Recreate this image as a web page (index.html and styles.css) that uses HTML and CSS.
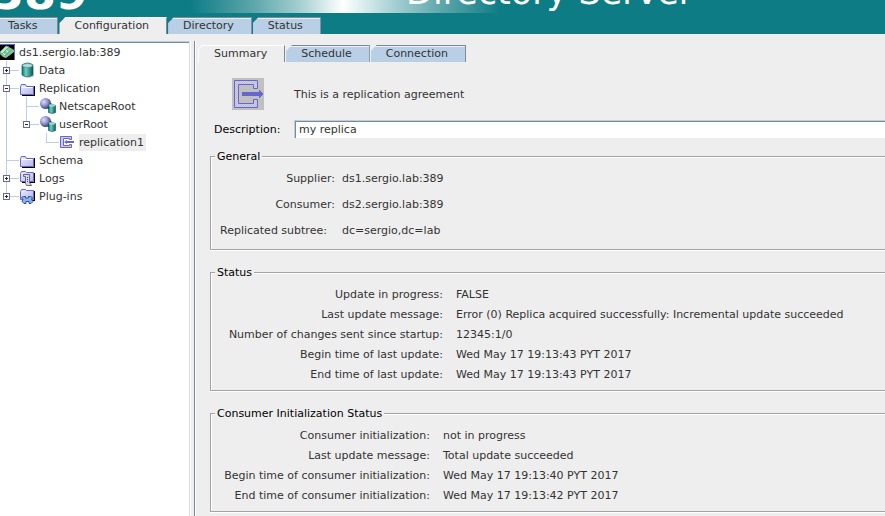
FILE: index.html
```html
<!DOCTYPE html>
<html lang="en">
<head>
<meta charset="utf-8">
<title>389 Directory Server</title>
<link rel="stylesheet" href="styles.css">
</head>
<body>
<svg class="defs" width="0" height="0" aria-hidden="true">
  <defs>
    <pattern id="dither" width="2" height="2" patternUnits="userSpaceOnUse"><rect width="2" height="2" fill="#ccccff"/><rect width="1" height="1" fill="#c0c0c0"/><rect x="1" y="1" width="1" height="1" fill="#c0c0c0"/></pattern>
    <linearGradient id="teal"><stop offset="0" stop-color="#0a6f70"/><stop offset=".35" stop-color="#6fd0c4"/><stop offset="1" stop-color="#06565a"/></linearGradient>
    <linearGradient id="lilac" x2="1" y2="1"><stop offset="0" stop-color="#ececff"/><stop offset="1" stop-color="#b4b4e6"/></linearGradient>
    <radialGradient id="ball" cx=".35" cy=".35" r=".7"><stop offset="0" stop-color="#dcdcff"/><stop offset=".5" stop-color="#9494cc"/><stop offset="1" stop-color="#34346e"/></radialGradient>
    <symbol id="folder" viewBox="0 0 16 16">
      <path d="M14 6h1v10H2v-1h12z" fill="#000"/>
      <path d="M.5 14.500V6.500l1-2h4l1 2h7v8z" fill="url(#lilac)" stroke="#6666cc"/>
      <path d="M1.500 7.500h11" stroke="#fff"/>
    </symbol>
    <symbol id="suffix" viewBox="0 0 16 16">
      <circle cx="5.500" cy="5.500" r="5.500" fill="url(#ball)"/>
      <path d="M11 5q1 4-3 6" stroke="#22224e" fill="none"/>
      <path d="M8.500 7.500q4-2 7 0v7q-3 2-7 0z" fill="url(#teal)" stroke="#07575a" stroke-width=".6"/>
      <ellipse cx="12" cy="7.500" rx="3.200" ry="1.200" fill="#8ee0d4"/>
    </symbol>
  </defs>
</svg>

<header class="header">
  <div class="banner">
    <span class="brand">389</span>
    <span class="product">Directory Server</span>
  </div>
  <div class="tabs" role="tablist">
    <button class="tab first" role="tab">Tasks</button>
    <button class="tab active" role="tab" aria-selected="true">Configuration</button>
    <button class="tab" role="tab">Directory</button>
    <button class="tab" role="tab">Status</button>
  </div>
</header>

<main class="workspace">
  <nav class="tree-pane">
    <div class="row root">
      <svg class="icon" viewBox="0 0 16 16"><path d="M0 0h15v16H0z" fill="#000"/><path d="M0 .5h14.500v15.500" fill="none" stroke="#6666cc"/><path d="M0 8l6-6 3 1 5 3v2l-8 6-3-1-3-3z" fill="#7fc99b"/><path d="M0 8l6-6 3 1-7 7zM5 12l8-7" fill="#b9ecc8" stroke="#5fa87c"/><path d="M3 9l2 2M6 6l2 2" stroke="#fff"/></svg>
      <span>ds1.sergio.lab:389</span>
    </div>
    <ul class="tree">
      <li>
        <div class="row">
          <button class="toggle closed" aria-label="Expand Data"></button>
          <svg class="icon" viewBox="0 0 16 16"><path d="M2 3q6-4 11 0v10q-5 4-11 0z" fill="url(#teal)" stroke="#0a5c5e" stroke-width=".7"/><ellipse cx="7.500" cy="3.500" rx="5" ry="2" fill="#b7dcd8" stroke="#3c8c8c" stroke-width=".7"/><path d="M13.500 5v9l-3 1" fill="none" stroke="#bbb"/></svg>
          <span>Data</span>
        </div>
      </li>
      <li>
        <div class="row">
          <button class="toggle" aria-label="Collapse Replication"></button>
          <svg class="icon"><use href="#folder"/></svg>
          <span>Replication</span>
        </div>
        <ul class="tree">
          <li>
            <div class="row"><svg class="icon"><use href="#suffix"/></svg><span>NetscapeRoot</span></div>
          </li>
          <li>
            <div class="row">
              <button class="toggle" aria-label="Collapse userRoot"></button>
              <svg class="icon"><use href="#suffix"/></svg>
              <span>userRoot</span>
            </div>
            <ul class="tree">
              <li>
                <div class="row"><svg class="icon" viewBox="0 0 16 16"><path d="M.5 2.500h11v3h-2v-1h-6v7h6v-1h2v3H.5z" fill="#ccccff" stroke="#6666cc"/><path d="M4 8l3-2v1h7v2H7v1z" fill="#6666cc"/></svg><span class="selected">replication1</span></div>
              </li>
            </ul>
          </li>
        </ul>
      </li>
      <li>
        <div class="row"><svg class="icon"><use href="#folder"/></svg><span>Schema</span></div>
      </li>
      <li>
        <div class="row">
          <button class="toggle closed" aria-label="Expand Logs"></button>
          <svg class="icon" viewBox="0 0 16 16"><path d="M14 3h1v10H2v-1h12z" fill="#000"/><path d="M.5 11.500V3.500l1-2h4l1 1h7v9z" fill="url(#lilac)" stroke="#6666cc"/><path d="M3.500 4.500h6v8l2 3h-5l-1-2v-7h-2z" fill="#d8d8e4" stroke="#666688"/><path d="M7 7.500h1M7 9.500h1M7 11.500h1" stroke="#444466"/></svg>
          <span>Logs</span>
        </div>
      </li>
      <li>
        <div class="row">
          <button class="toggle closed" aria-label="Expand Plug-ins"></button>
          <svg class="icon" viewBox="0 0 16 16"><path d="M14 3h1v10H2v-1h12z" fill="#000"/><path d="M.5 11.500V3.500l1-2h4l1 1h7v9z" fill="url(#lilac)" stroke="#6666cc"/><path d="M1.500 9.500l2-1h2v1.500h3V8.500h2l2 1-1 2 1.500 2-2 2h-2v-2h-3v2h-2l-2-2 1-2z" fill="#85b5ed" stroke="#345098"/></svg>
          <span>Plug-ins</span>
        </div>
      </li>
    </ul>
  </nav>

  <section class="detail">
    <div class="tabs" role="tablist">
      <button class="tab active" role="tab" aria-selected="true">Summary</button>
      <button class="tab" role="tab">Schedule</button>
      <button class="tab" role="tab">Connection</button>
    </div>

    <div class="intro">
      <svg class="intro-icon" viewBox="0 0 32 32"><path d="M0 0h32v32H0z" fill="#c0c0c0"/><path d="M2.500 2.500h23v8h-4v-4h-15v19h15v-4h4v8h-23z" fill="url(#dither)" stroke="#6666cc"/><path d="M10 14h17v-2h1v1h1v1h1v1h1v2h-1v1h-1v1h-1v1h-1v-2H10z" fill="#6666cc"/></svg>
      <p>This is a replication agreement</p>
    </div>

    <div class="description">
      <label for="description">Description:</label>
      <input id="description" type="text" value="my replica">
    </div>

    <fieldset class="group general">
      <legend>General</legend>
      <dl>
        <dt>Supplier:</dt><dd>ds1.sergio.lab:389</dd>
        <dt>Consumer:</dt><dd>ds2.sergio.lab:389</dd>
        <dt class="wide">Replicated subtree:</dt><dd>dc=sergio,dc=lab</dd>
      </dl>
    </fieldset>

    <fieldset class="group status">
      <legend>Status</legend>
      <dl>
        <dt>Update in progress:</dt><dd>FALSE</dd>
        <dt>Last update message:</dt><dd>Error (0) Replica acquired successfully: Incremental update succeeded</dd>
        <dt>Number of changes sent since startup:</dt><dd>12345:1/0</dd>
        <dt>Begin time of last update:</dt><dd>Wed May 17 19:13:43 PYT 2017</dd>
        <dt>End time of last update:</dt><dd>Wed May 17 19:13:43 PYT 2017</dd>
      </dl>
    </fieldset>

    <fieldset class="group consumer">
      <legend>Consumer Initialization Status</legend>
      <dl>
        <dt>Consumer initialization:</dt><dd>not in progress</dd>
        <dt>Last update message:</dt><dd>Total update succeeded</dd>
        <dt>Begin time of consumer initialization:</dt><dd>Wed May 17 19:13:40 PYT 2017</dd>
        <dt>End time of consumer initialization:</dt><dd>Wed May 17 19:13:42 PYT 2017</dd>
      </dl>
    </fieldset>
  </section>
</main>
</body>
</html>
```
FILE: styles.css
```css
* { box-sizing: border-box; }

html, body { height: 100%; }

body {
  margin: 0;
  display: flex;
  flex-direction: column;
  overflow: hidden;
  background: #eee;
  color: #333;
  font: 11px/15px "DejaVu Sans", sans-serif;
}

button, input { font: inherit; color: inherit; }

.defs { position: absolute; }

/* Header */
.header { background: #0d7c85; }

.banner {
  display: flex;
  align-items: flex-end;
  height: 13px;
  overflow: hidden;
  color: #fff;
  white-space: nowrap;
  background: linear-gradient(90deg, #0d7c85 190px, #5fa8ac 255px, #a5cfd1 300px, #fff 343px, #a5cfd1 395px, #5fa8ac 440px, #0d7c85 500px);
}

.brand {
  width: 407px;
  margin-left: -8px;
  font-size: 46px;
  line-height: 40px;
  font-weight: bold;
}

.product {
  margin-left: 7px;
  margin-bottom: 3px;
  font-size: 35px;
  line-height: 35px;
}

/* Tabs */
.tabs { display: flex; }

.header .tabs { padding-top: 4px; }

.tab {
  height: 17px;
  padding: 0 17px 1px 15px;
  border: 0;
  border-top: 1px solid #7a8a99;
  border-right: 1px solid #7a8a99;
  margin-right: 1px;
  background: #b8cfe5;
  box-shadow: inset 0 1px #eee;
  line-height: 15px;
  white-space: nowrap;
  clip-path: polygon(0 6px, 6px 0, 100% 0, 100% 100%, 0 100%);
}

.tab.first { padding: 0 20px 1px 8px; clip-path: none; }

.tab.active { background: #eee; border-top-color: #fff; }

/* Workspace */
.workspace {
  flex: 1;
  min-height: 0;
  display: flex;
}

.tree-pane {
  flex: 0 0 190px;
  margin-top: 7px;
  border-top: 1px solid #b8cfe5;
  border-right: 1px solid #ddd;
  background: #fff;
  box-shadow: inset 0 1px #7a8a99, 1px 0 #fff;
  padding-top: 1px;
}

.tree { list-style: none; margin: 0; padding: 0; }

.tree li {
  padding-left: 20px;
  background:
    linear-gradient(#b8cfe5, #b8cfe5) 6px 0 / 1px 100% no-repeat,
    linear-gradient(#b8cfe5, #b8cfe5) 6px 9px / 13px 1px no-repeat;
}

.tree li:last-child {
  background:
    linear-gradient(#b8cfe5, #b8cfe5) 6px 0 / 1px 9px no-repeat,
    linear-gradient(#b8cfe5, #b8cfe5) 6px 9px / 13px 1px no-repeat;
}

.row {
  display: flex;
  align-items: center;
  height: 18px;
  line-height: 17px;
  white-space: nowrap;
}

.icon {
  flex: none;
  width: 16px;
  height: 16px;
  margin-right: 3px;
}

.toggle {
  flex: none;
  width: 7px;
  height: 7px;
  margin: 1px 10px 0 -17px;
  padding: 0;
  border: 1px solid #6666aa;
  background: linear-gradient(#222266, #222266) center / 3px 1px no-repeat #fff;
}

.toggle.closed {
  background:
    linear-gradient(#222266, #222266) center / 3px 1px no-repeat,
    linear-gradient(#222266, #222266) center / 1px 3px no-repeat #fff;
}

.selected {
  padding-right: 2px;
  background: #eee;
}

/* Detail */
.detail {
  flex: 1;
  min-width: 0;
  margin: 7px 0 0 4px;
  padding: 4px 0 0 3px;
  border-left: 1px solid #7a8a99;
  box-shadow: inset 1px 0 #fff;
}

.detail .tab.active {
  border-left: 1px solid #fff;
  border-radius: 6px 0 0 0;
  clip-path: none;
}

.intro {
  display: flex;
  align-items: center;
  gap: 30px;
  margin: 16px 0 0 34px;
}

.intro p { margin: 0; }

.intro-icon { width: 32px; height: 32px; }

.description {
  display: grid;
  grid-template-columns: 80px 1fr;
  align-items: center;
  margin: 10px 0 0 16px;
  color: #000;
}

.description input {
  width: 100%;
  height: 18px;
  padding: 0 4px;
  border: 0;
  border-top: 1px solid #b8cfe5;
  border-left: 1px solid #b8cfe5;
  box-shadow: inset 1px 1px #7a8a99;
  outline: 0;
  background: #fff;
  color: #333;
}

/* Groups */
.group {
  min-width: 0;
  margin: 15px 0 0 12px;
  padding: 5px 0 5px 9px;
  border: 1px solid #a3a3a3;
  border-right: 0;
  box-shadow: 0 1px #fff, inset 1px 1px #fff;
}

.group legend {
  margin-left: -5px;
  padding: 0 2px;
  background: #eee;
  color: #000;
}

.group dl {
  display: grid;
  margin: 0;
  line-height: 20px;
  white-space: nowrap;
}

.group dt { text-align: right; }
.group dt.wide { text-align: left; }
.group dd { margin: 0; }

.general { margin-top: 11px; padding-top: 2px; }
.general dl { grid-template-columns: 115px 1fr; column-gap: 7px; line-height: 26px; }
.status dl { grid-template-columns: 223px 1fr; column-gap: 13px; }
.consumer dl { grid-template-columns: 210px 1fr; column-gap: 13px; }
```
